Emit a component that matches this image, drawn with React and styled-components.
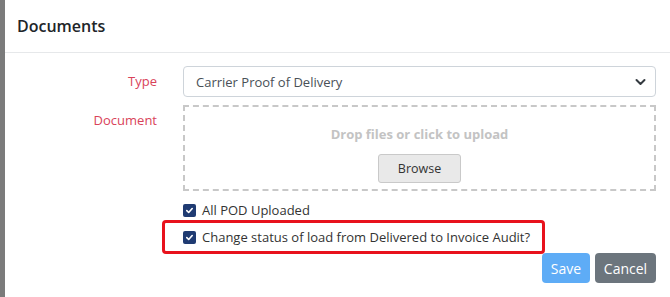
import React from "react";
import styled, { createGlobalStyle } from "styled-components";

const GlobalStyle = createGlobalStyle`
  html, body { margin: 0; padding: 0; }
  body {
    background: #7b7b7b;
    font-family: "Open Sans", "Noto Sans", Arial, sans-serif;
    width: 670px;
    height: 297px;
    overflow: hidden;
  }
  * { box-sizing: border-box; }
`;

const Modal = styled.div`
  margin-left: 5px;
  width: 665px;
  height: 297px;
  background: #ffffff;
  display: flex;
  flex-direction: column;
`;

const Header = styled.div`
  height: 53px;
  border-bottom: 1px solid #e6e8ea;
  display: flex;
  align-items: center;
  padding: 0 12px 1px;
`;

const Title = styled.h5`
  margin: 0;
  font-size: 16px;
  font-weight: 600;
  color: #212529;
`;

const Body = styled.div`
  padding: 13px 14px 0 0;
  display: flex;
  flex-direction: column;
`;

const FormRow = styled.div`
  display: grid;
  grid-template-columns: 152px 473px;
  column-gap: 26px;
  margin-top: ${(p) => p.$gap || 0}px;
`;

const Label = styled.div`
  text-align: right;
  color: #d9435a;
  font-size: 13px;
  line-height: 31px;
`;

const SelectBox = styled.div`
  height: 31px;
  border: 1px solid #ced4da;
  border-radius: 4px;
  padding: 0 9px 0 12px;
  display: flex;
  align-items: center;
  justify-content: space-between;
  font-size: 13px;
  color: #495057;
`;

const Dropzone = styled.div`
  height: 86px;
  border: 2px dashed #c8c8c8;
  display: flex;
  flex-direction: column;
  align-items: center;
  padding-top: 17px;
`;

const DropText = styled.div`
  font-size: 13px;
  font-weight: 700;
  line-height: 20px;
  color: #c3c3c3;
`;

const BrowseButton = styled.button`
  margin-top: 10px;
  width: 83px;
  height: 29px;
  background: #e9e9e9;
  border: 1px solid #c9c9c9;
  border-radius: 3px;
  font-family: inherit;
  font-size: 12.5px;
  color: #333;
  padding: 0;
`;

const CheckRow = styled.label`
  position: relative;
  display: flex;
  align-items: center;
  gap: 6px;
  height: 22px;
  font-size: 13px;
  color: #333;
`;

const Box = styled.span`
  width: 13px;
  height: 13px;
  border-radius: 2px;
  background: #1f3b72;
  display: inline-flex;
  align-items: center;
  justify-content: center;
`;

const Highlight = styled.span`
  position: absolute;
  left: -21px;
  top: -6px;
  width: 383px;
  height: 34px;
  border: 3px solid #e8121c;
  border-radius: 4px;
  pointer-events: none;
`;

const Footer = styled.div`
  display: flex;
  justify-content: flex-end;
  gap: 5px;
  margin-top: 5px;
`;

const Button = styled.button`
  height: 30px;
  width: ${(p) => p.$w}px;
  border: none;
  border-radius: 4px;
  background: ${(p) => p.$bg};
  color: #fff;
  font-family: inherit;
  font-size: 14px;
  padding: 0;
`;

const Check = () => (
  <Box>
    <svg width="9" height="9" viewBox="0 0 10 10">
      <path d="M2 5.2 L4.1 7.2 L8 2.8" fill="none" stroke="#fff" strokeWidth="1.8" strokeLinecap="round" strokeLinejoin="round" />
    </svg>
  </Box>
);

export default function App() {
  return (
    <>
      <GlobalStyle />
      <Modal>
        <Header>
          <Title>Documents</Title>
        </Header>
        <Body>
          <FormRow>
            <Label>Type</Label>
            <SelectBox>
              <span>Carrier Proof of Delivery</span>
              <svg width="11" height="8" viewBox="0 0 11 8">
                <path d="M1.5 2 L5.5 6 L9.5 2" fill="none" stroke="#343a40" strokeWidth="2" strokeLinecap="round" strokeLinejoin="round" />
              </svg>
            </SelectBox>
          </FormRow>
          <FormRow $gap={8}>
            <Label>Document</Label>
            <Dropzone>
              <DropText>Drop files or click to upload</DropText>
              <BrowseButton>Browse</BrowseButton>
            </Dropzone>
          </FormRow>
          <FormRow $gap={8}>
            <span />
            <CheckRow>
              <Check />
              All POD Uploaded
            </CheckRow>
          </FormRow>
          <FormRow $gap={5}>
            <span />
            <CheckRow>
              <Highlight />
              <Check />
              Change status of load from Delivered to Invoice Audit?
            </CheckRow>
          </FormRow>
          <Footer>
            <Button $w={48} $bg="#5eacf6">Save</Button>
            <Button $w={61} $bg="#6c757d">Cancel</Button>
          </Footer>
        </Body>
      </Modal>
    </>
  );
}
